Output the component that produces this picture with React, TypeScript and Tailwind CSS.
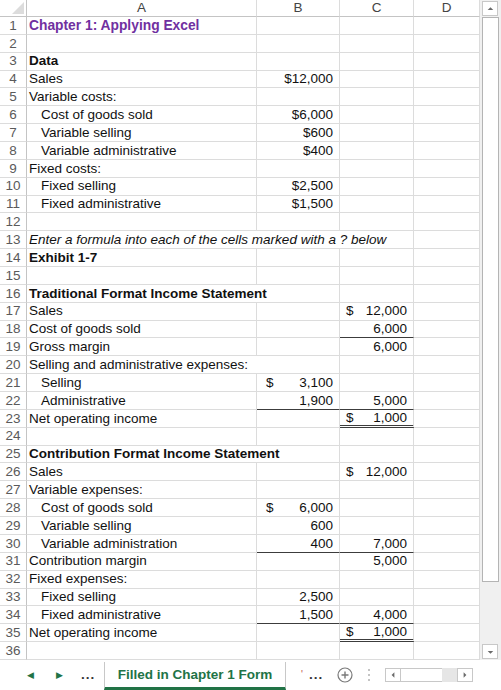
import type { ReactNode } from "react";

type Num = {
  v: string;
  d?: boolean;
  line?: "single" | "double";
};

type Row = {
  a?: string;
  indent?: boolean;
  bold?: boolean;
  italic?: boolean;
  title?: boolean;
  span?: 1 | 2 | 3;
  b?: Num;
  c?: Num;
};

const rows: Row[] = [
  { a: "Chapter 1: Applying Excel", title: true },
  {},
  { a: "Data", bold: true },
  { a: "Sales", b: { v: "$12,000" } },
  { a: "Variable costs:" },
  { a: "Cost of goods sold", indent: true, b: { v: "$6,000" } },
  { a: "Variable selling", indent: true, b: { v: "$600" } },
  { a: "Variable administrative", indent: true, b: { v: "$400" } },
  { a: "Fixed costs:" },
  { a: "Fixed selling", indent: true, b: { v: "$2,500" } },
  { a: "Fixed administrative", indent: true, b: { v: "$1,500" } },
  {},
  { a: "Enter a formula into each of the cells marked with a ? below", italic: true, span: 3 },
  { a: "Exhibit 1-7", bold: true },
  {},
  { a: "Traditional Format Income Statement", bold: true, span: 2 },
  { a: "Sales", c: { v: "12,000", d: true } },
  { a: "Cost of goods sold", c: { v: "6,000", line: "single" } },
  { a: "Gross margin", c: { v: "6,000" } },
  { a: "Selling and administrative expenses:", span: 2 },
  { a: "Selling", indent: true, b: { v: "3,100", d: true } },
  { a: "Administrative", indent: true, b: { v: "1,900", line: "single" }, c: { v: "5,000", line: "single" } },
  { a: "Net operating income", c: { v: "1,000", d: true, line: "double" } },
  {},
  { a: "Contribution Format Income Statement", bold: true, span: 2 },
  { a: "Sales", c: { v: "12,000", d: true } },
  { a: "Variable expenses:" },
  { a: "Cost of goods sold", indent: true, b: { v: "6,000", d: true } },
  { a: "Variable selling", indent: true, b: { v: "600" } },
  { a: "Variable administration", indent: true, b: { v: "400", line: "single" }, c: { v: "7,000", line: "single" } },
  { a: "Contribution margin", c: { v: "5,000" } },
  { a: "Fixed expenses:" },
  { a: "Fixed selling", indent: true, b: { v: "2,500" } },
  { a: "Fixed administrative", indent: true, b: { v: "1,500", line: "single" }, c: { v: "4,000", line: "single" } },
  { a: "Net operating income", c: { v: "1,000", d: true, line: "double" } },
  {},
];

const bottomLine = (n?: Num) => {
  if (n?.line === "double") return "border-b-[3px] border-double border-b-[#3c3c3c]";
  if (n?.line === "single") return "border-b border-b-[#3c3c3c]";
  return "border-b border-b-[#dcdcdc]";
};

const NumCell = ({ n, width, dollarPad }: { n?: Num; width: string; dollarPad: string }) => (
  <div className={`${width} flex shrink-0 items-center justify-between border-r border-r-[#dcdcdc] pr-[6px] ${bottomLine(n)}`}>
    <span className={dollarPad}>{n?.d ? "$" : ""}</span>
    <span>{n?.v ?? ""}</span>
  </div>
);

const GridRow = ({ row, index }: { row: Row; index: number }) => {
  const span = row.span ?? 1;
  const aWidth = span === 3 ? "w-[387px]" : span === 2 ? "w-[313px]" : "w-[230px]";
  let textClass = "text-[#111]";
  if (row.title) textClass = "font-bold text-[#7030a0] text-[13.8px]";
  else if (row.bold) textClass = "font-bold text-[#111]";
  else if (row.italic) textClass = "italic text-[#111]";

  return (
    <div className="flex h-[17.86px]">
      <div className="flex w-[27px] shrink-0 items-center justify-center border-r border-b border-r-[#c4c4c4] border-b-[#dcdcdc] text-[#5a5a5a]">
        {index + 1}
      </div>
      <div
        className={`${aWidth} flex shrink-0 items-center overflow-hidden whitespace-nowrap border-r border-b border-[#dcdcdc] ${row.indent ? "pl-[14px]" : "pl-[2px]"} ${textClass}`}
      >
        {row.a ?? ""}
      </div>
      {span < 2 ? <NumCell n={row.b} width="w-[83px]" dollarPad="pl-[9px]" /> : null}
      {span < 3 ? <NumCell n={row.c} width="w-[74px]" dollarPad="pl-[6px]" /> : null}
      <div className="w-[66px] shrink-0 border-r border-b border-[#dcdcdc]" />
    </div>
  );
};

const ColHead = ({ w, children }: { w: string; children: ReactNode }) => (
  <div className={`${w} flex shrink-0 items-center justify-center border-r border-b border-r-[#dcdcdc] border-b-[#c4c4c4] text-[#444]`}>
    {children}
  </div>
);

const ArrowBox = ({ dir }: { dir: "up" | "down" | "left" | "right" }) => {
  const pts =
    dir === "up" ? "5,8 11,8 8,5" : dir === "down" ? "5,6 11,6 8,9" : dir === "left" ? "9,4 9,10 6,7" : "6,4 6,10 9,7";
  const box = dir === "up" || dir === "down" ? "h-[15px] w-[16px]" : "h-[14px] w-[16px]";
  return (
    <div className={`${box} flex shrink-0 items-center justify-center border border-[#c8c8c8] bg-white`}>
      <svg width="15" height="14" viewBox="0 0 15 14">
        <polygon points={pts} fill="#6a6a6a" />
      </svg>
    </div>
  );
};

export default function App() {
  return (
    <div className="flex h-[690px] w-[501px] flex-col overflow-hidden bg-white text-[13.5px] leading-none text-[#111] [font-family:'Liberation_Sans',Arial,sans-serif]">
      <div className="flex h-[660px]">
        <div className="flex w-[480px] shrink-0 flex-col">
          <div className="flex h-[17px]">
            <div className="relative w-[27px] shrink-0 border-r border-b border-r-[#c4c4c4] border-b-[#c4c4c4]">
              <svg className="absolute right-[2px] bottom-[2px]" width="12" height="12" viewBox="0 0 12 12">
                <polygon points="12,0 12,12 0,12" fill="#dcdcdc" />
              </svg>
            </div>
            <ColHead w="w-[230px]">A</ColHead>
            <ColHead w="w-[83px]">B</ColHead>
            <ColHead w="w-[74px]">C</ColHead>
            <ColHead w="w-[66px]">D</ColHead>
          </div>
          {rows.map((row, i) => (
            <GridRow key={i} row={row} index={i} />
          ))}
        </div>
        <div className="flex w-[21px] flex-col bg-[#f0f0f0] pl-[2px]">
          <div className="mt-[1px]">
            <ArrowBox dir="up" />
          </div>
          <div className="mt-[1px] h-[565px] w-[17px] border border-[#b4b4b4] bg-white" />
          <div className="flex-1" />
          <div className="mb-[1px]">
            <ArrowBox dir="down" />
          </div>
        </div>
      </div>

      <div className="flex h-[30px] items-stretch bg-white">
        <div className="flex w-[104px] shrink-0 items-center text-[#217346]">
          <span className="ml-[27px] text-[9px]">◀</span>
          <span className="ml-[22px] text-[9px]">▶</span>
          <span className="ml-[18px] font-bold tracking-[1px] text-[#333]">...</span>
        </div>
        <div className="mt-[2px] flex w-[182px] shrink-0 items-center justify-center border-x border-b-[3px] border-x-[#c8c8c8] border-b-[#217346] bg-white font-bold text-[#217346]">
          Filled in Chapter 1 Form
        </div>
        <div className="flex items-center">
          <span className="ml-[15px] text-[10px] text-[#c0504d]">'</span>
          <span className="ml-[6px] font-bold tracking-[1px] text-[#333]">...</span>
          <svg className="ml-[14px]" width="16" height="16" viewBox="0 0 16 16">
            <circle cx="8" cy="8" r="7" fill="none" stroke="#7a7a7a" strokeWidth="1.2" />
            <path d="M8 4.5v7M4.5 8h7" stroke="#7a7a7a" strokeWidth="1.4" />
          </svg>
          <svg className="ml-[14px]" width="4" height="14" viewBox="0 0 4 14">
            <circle cx="2" cy="2" r="1" fill="#b0b0b0" />
            <circle cx="2" cy="7" r="1" fill="#b0b0b0" />
            <circle cx="2" cy="12" r="1" fill="#b0b0b0" />
          </svg>
          <div className="ml-[14px] flex items-center">
            <ArrowBox dir="left" />
            <div className="h-[14px] w-[41px] border-y border-[#c8c8c8] bg-white" />
            <div className="h-[14px] w-[15px] bg-[#e6e6e6]" />
            <ArrowBox dir="right" />
          </div>
        </div>
      </div>
    </div>
  );
}
